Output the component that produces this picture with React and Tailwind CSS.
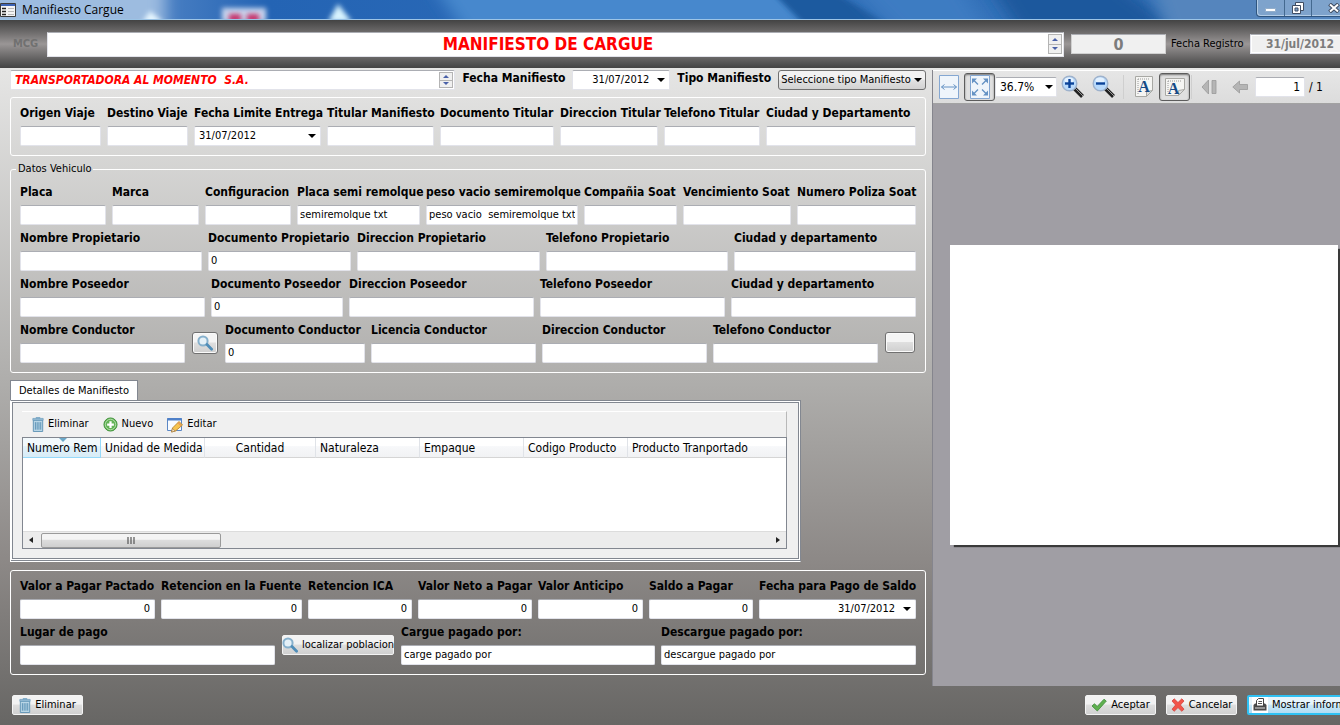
import React, { useId } from "react";

const FIELD_BOX =
  "h-5 w-full min-w-0 rounded-[2px] border border-[#e2e3ea] border-t-[#abadb3] bg-white";
const BUTTON =
  "flex items-center justify-center rounded-[3px] border border-[#707070] bg-linear-to-b from-[#f4f4f4] from-45% via-[#dfdfdf] via-50% to-[#cfcfcf] shadow-[inset_0_0_0_1px_#fafafa]";
const LIGHT_BUTTON =
  "flex h-5 items-center gap-1 whitespace-nowrap rounded-[2px] border border-[#f4f4f4] bg-linear-to-b from-[#f2f2f2] from-45% via-[#dedede] via-50% to-[#d0d0d0] text-[11px]";

function Caret({ className = "" }) {
  return (
    <svg viewBox="0 0 8 4" className={"h-1 w-2 shrink-0 " + className} aria-hidden="true">
      <path d="M0 0h8L4 4z" fill="#000" />
    </svg>
  );
}

function Label({ id, children }) {
  return (
    <label htmlFor={id} className="block h-4 text-[12px] leading-4 font-bold whitespace-nowrap text-black">
      {children}
    </label>
  );
}

function DateBox({ id, value, right }) {
  return (
    <div className={"flex items-center pr-1 " + FIELD_BOX}>
      <input
        id={id}
        type="text"
        defaultValue={value}
        className={"h-4 w-full min-w-0 bg-transparent px-1 text-[11px] leading-4 outline-none " + (right ? "pr-2 text-right" : "")}
      />
      <button type="button" aria-label="Abrir calendario" className="flex h-4 shrink-0 items-center">
        <Caret />
      </button>
    </div>
  );
}

function Field({ label, value = "", date, right }) {
  const id = useId();
  return (
    <div className="flex min-w-0 flex-col gap-[5px]">
      <Label id={id}>{label}</Label>
      {date ? (
        <DateBox id={id} value={value} right={right} />
      ) : (
        <input
          id={id}
          type="text"
          defaultValue={value}
          className={"pb-0.5 text-[11px] leading-4 outline-none " + FIELD_BOX + (right ? " px-1 text-right" : " px-0.5")}
        />
      )}
    </div>
  );
}

function Spinner({ tall }) {
  const half = "flex flex-1 items-center justify-center border border-[#b4b4b4] bg-[#f0f0f0]";
  return (
    <div className={"flex w-[14px] shrink-0 flex-col " + (tall ? "h-5" : "h-4")}>
      <button type="button" aria-label="Subir" className={half}>
        <svg viewBox="0 0 6 3" className="h-[3px] w-1.5"><path d="M3 0l3 3H0z" fill="#4a61a8" /></svg>
      </button>
      <button type="button" aria-label="Bajar" className={half + " border-t-0"}>
        <svg viewBox="0 0 6 3" className="h-[3px] w-1.5"><path d="M0 0h6L3 3z" fill="#4a61a8" /></svg>
      </button>
    </div>
  );
}

function SearchIcon() {
  return (
    <svg viewBox="0 0 16 16" className="size-4 shrink-0" aria-hidden="true">
      <circle cx="6" cy="6" r="4.6" fill="#e4f0f7" stroke="#86b0cc" strokeWidth="2" />
      <path d="M10 9.6l4.6 4.6" stroke="#4f8db8" strokeWidth="2.8" strokeLinecap="round" />
    </svg>
  );
}

function TrashIcon() {
  return (
    <svg viewBox="0 0 12 16" className="h-[15px] w-3 shrink-0" aria-hidden="true">
      <path d="M4 1.5V.5h4v1M.5 1.5h11v2H.5z" fill="#a5c8dd" stroke="#6d9dbd" strokeWidth=".8" />
      <path d="M1 3.5h10V15.5H1z" fill="#b9d6e6" stroke="#5f93b5" />
      <path d="M3.2 5.5v8M5.1 5.5v8M7 5.5v8M8.9 5.5v8" stroke="#4d87ad" strokeWidth=".9" />
    </svg>
  );
}

function AddIcon() {
  return (
    <svg viewBox="0 0 16 16" className="size-[15px] shrink-0" aria-hidden="true">
      <circle cx="8" cy="8" r="7" fill="#63b357" stroke="#3f9139" />
      <circle cx="8" cy="8" r="5.6" fill="none" stroke="#b7e0ae" />
      <path d="M8 4.4v7.2M4.4 8h7.2" stroke="#fff" strokeWidth="2.4" />
    </svg>
  );
}

function EditIcon() {
  return (
    <svg viewBox="0 0 16 16" className="size-4 shrink-0" aria-hidden="true">
      <path d="M.5 1.5h14v12H.5z" fill="#f8fbff" stroke="#5b87c5" />
      <path d="M.5 1h14v2.5H.5z" fill="#4f80c8" />
      <path d="M4.5 15l1-4 6.5-6.5 3.500 3.500L8.500 14z" fill="#f6c44f" stroke="#b9832a" strokeWidth=".9" />
      <path d="M4.500 15l1-3.600 2.600 2.600z" fill="#f8e3c2" stroke="#9a7440" strokeWidth=".6" />
      <path d="M11 5.600l3 3" stroke="#e8935a" strokeWidth="1.200" />
    </svg>
  );
}

function CheckIcon() {
  return (
    <svg viewBox="0 0 16 14" className="h-[14px] w-4 shrink-0" aria-hidden="true">
      <path d="M1 8l2.500-2.300 2.700 2.800L13 1.200l2.300 1.900L6.300 13z" fill="#5fb04f" stroke="#3d8a3a" strokeWidth=".8" />
    </svg>
  );
}

function CrossIcon() {
  return (
    <svg viewBox="0 0 14 14" className="size-[14px] shrink-0" aria-hidden="true">
      <path d="M1 3l2.200-2.200L7 4.500 10.800.8 13 3 9.400 7 13 11.200 10.800 13.300 7 9.600 3.200 13.300 1 11.200 4.600 7z" fill="#f25449" stroke="#cf3a35" strokeWidth=".7" />
    </svg>
  );
}

function PrinterIcon() {
  return (
    <svg viewBox="0 0 16 16" className="size-4 shrink-0" aria-hidden="true">
      <path d="M0 0h16v16H0z" fill="#fff" />
      <path d="M1.500 8L3 6.500h10L14.500 8v5.500h-13z" fill="#4a4a4a" />
      <path d="M4.500 9V3.500l2-2h5V9z" fill="#fff" stroke="#444" />
      <path d="M6.500 4.500h3.500M6 6.500h4" stroke="#555" />
      <path d="M3 11h10" stroke="#ddd" />
    </svg>
  );
}

function FitWidthIcon() {
  return (
    <svg viewBox="0 0 20 24" className="h-6 w-5" aria-hidden="true">
      <path d="M.5.5h19v23H.5z" fill="#eff5fb" stroke="#84a7d2" />
      <path d="M2.500 12h15M5.500 9.500L2.500 12l3 2.500M14.500 9.500l3 2.500-3 2.500" fill="none" stroke="#6492c4" />
    </svg>
  );
}

function FitPageIcon() {
  return (
    <svg viewBox="0 0 20 24" className="h-6 w-5" aria-hidden="true">
      <path d="M.5.5h19v23H.5z" fill="#eff5fb" stroke="#84a7d2" />
      <path d="M8 9.500L3 4.500M12 9.500l5-5M8 14.500l-5 5M12 14.500l5 5" stroke="#6492c4" strokeWidth="1.300" />
      <path d="M2 3.500h5l-5 5zM18 3.500v5l-5-5zM2 20.500v-5l5 5zM18 20.500h-5l5-5z" fill="#6492c4" />
    </svg>
  );
}

function ZoomIcon({ plus }) {
  return (
    <svg viewBox="0 0 24 24" className="size-6" aria-hidden="true">
      <path d="M13 13l8.500 8.500" stroke="#222" strokeWidth="4" />
      <path d="M13.500 12.500l8.500 8.500" stroke="#999" strokeWidth="1" />
      <circle cx="8.500" cy="8.500" r="7.300" fill="#b9dafb" stroke="#9eb2cc" strokeWidth="1.400" />
      <ellipse cx="8" cy="5.500" rx="4.500" ry="3" fill="#e3f1ff" />
      <path d="M4 8.500h9" stroke="#0a4299" strokeWidth="2.400" />
      {plus && <path d="M8.500 4v9" stroke="#0a4299" strokeWidth="2.400" />}
    </svg>
  );
}

function PageIcon({ landscape }) {
  return (
    <svg viewBox="0 0 22 22" className="size-[22px]" aria-hidden="true">
      {landscape ? (
        <path d="M1.500 2.500h19v11l-6 6h-13z" fill="#f5f5f3" stroke="#a8a8a4" />
      ) : (
        <path d="M2.500.5h17v14l-6 6h-11z" fill="#f5f5f3" stroke="#a8a8a4" />
      )}
      <path d={landscape ? "M4 5h14" : "M5 3h12"} stroke="#999" strokeDasharray="1 1" />
      <path d={landscape ? "M4 5v12" : "M5 3v15"} stroke="#999" strokeDasharray="1 1" />
      <path d={landscape ? "M14.500 19.500v-5l6-1z" : "M13.500 20.500v-5l6-1z"} fill="#ddd" stroke="#a8a8a4" />
      <text x={landscape ? "9.500" : "11"} y={landscape ? "18" : "16"} textAnchor="middle" fontFamily="Liberation Serif, serif" fontWeight="bold" fontSize="16" fill="#164a86">
        A
      </text>
    </svg>
  );
}

function FirstIcon() {
  return (
    <svg viewBox="0 0 16 16" className="size-4" aria-hidden="true">
      <path d="M7.500 1v14L1 8z" fill="#b5b5b5" stroke="#999" strokeWidth=".8" />
      <path d="M11 1.500h4v13h-4z" fill="#b5b5b5" stroke="#999" strokeWidth=".8" />
    </svg>
  );
}

function PrevIcon() {
  return (
    <svg viewBox="0 0 16 14" className="h-[14px] w-4" aria-hidden="true">
      <path d="M.8 7L7.500 1v3.500h8v5h-8V13z" fill="#b5b5b5" stroke="#999" strokeWidth=".8" />
    </svg>
  );
}

function ToolButton({ label, pressed, children }) {
  return (
    <button
      type="button"
      aria-label={label}
      className={
        "flex h-7 w-[31px] shrink-0 items-center justify-center " +
        (pressed ? "rounded-[3px] border border-[#5c5c5c] bg-[#e0e0e0] shadow-[inset_0_1px_2px_#777]" : "")
      }
    >
      {children}
    </button>
  );
}

function TitleBar() {
  return (
    <div className="relative flex h-5 shrink-0 items-center justify-between overflow-hidden border-b border-[#9cc4e6] bg-linear-to-r from-[#7fa9d8] via-[#2464b4] via-20% to-[#3a77bb]">
      <svg viewBox="0 0 1340 19" preserveAspectRatio="none" className="absolute inset-0 h-full w-full" aria-hidden="true">
        <defs>
          <filter id="soft" x="-50%" y="-100%" width="200%" height="300%"><feGaussianBlur stdDeviation="8" /></filter>
          <filter id="mid" x="-50%" y="-50%" width="200%" height="200%"><feGaussianBlur stdDeviation="2.5" /></filter>
        </defs>
        <path d="M-20-20h185v60H-20z" fill="#9dbce0" filter="url(#soft)" />
        <path d="M430-20h350l40 60H470z" fill="#4788cd" filter="url(#soft)" />
        <path d="M770-10h60l70 40h-90z" fill="#1c5a9f" filter="url(#mid)" />
        <path d="M845-20h110l40 60h-90z" fill="#3c7cc2" filter="url(#soft)" />
        <path d="M985-20h130l80 60h-170z" fill="#1b589d" filter="url(#soft)" />
        <path d="M1150-20h210v60h-190z" fill="#5485bd" filter="url(#soft)" />
        <path d="M222 8h44v14h-44z" fill="#c9d6ee" filter="url(#mid)" />
        <path d="M229 14h12v8h-12zM247 14h12v8h-12z" fill="#c62f68" filter="url(#mid)" />
        <path d="M338 4l14 18h-24z" fill="#d8f4ff" filter="url(#mid)" />
        <path d="M150 11l14 12h-22z" fill="#e6f6ff" filter="url(#mid)" />
      </svg>
      <div className="relative flex items-center gap-1.5">
        <svg viewBox="0 0 16 14" className="h-[14px] w-4" aria-hidden="true">
          <path d="M.5.5h15v13H.5z" fill="#f4f4f4" stroke="#3c3c3c" />
          <path d="M1 1h14v2H1z" fill="#3c63b5" />
          <path d="M2 5.500h4M2 8.500h4M2 11.500h4" stroke="#222" strokeWidth="1.400" />
          <path d="M8 5.500h6M8 8.500h6M8 11.500h6" stroke="#b9b9b9" />
        </svg>
        <h1 className="font-['Open_Sans','Noto_Sans',sans-serif] text-[12px] leading-4 text-black">Manifiesto Cargue</h1>
      </div>
      <div className="relative -mr-[17px] flex h-[17px] shrink-0 self-start overflow-hidden rounded-bl-[4px] border border-t-0 border-[#2f557f] bg-[#7ea3cc] shadow-[inset_1px_-1px_0_#b4cde6]">
        <button type="button" aria-label="Minimizar" className="flex w-7 items-end justify-center border-r border-[#44698f] pb-1">
          <svg viewBox="0 0 11 4" className="h-1 w-[11px]"><path d="M.5.5h10v3H.5z" fill="#fff" stroke="#93aecb" /></svg>
        </button>
        <button type="button" aria-label="Restaurar" className="flex w-[27px] items-center justify-center border-r border-[#44698f]">
          <svg viewBox="0 0 12 12" className="size-3">
            <path d="M3.500.5h8v8h-8z" fill="#fff" stroke="#3f4d63" />
            <path d="M.5 3.500h8v8h-8z" fill="#fff" stroke="#3f4d63" />
            <path d="M3 6h3v3H3z" fill="#7ea3cc" stroke="#3f4d63" />
          </svg>
        </button>
        <button type="button" aria-label="Cerrar" className="flex w-11 items-center justify-center">
          <svg viewBox="0 0 12 10" className="h-2.5 w-3">
            <path d="M1.500 1l9 8M10.500 1l-9 8" stroke="#3f4d63" strokeWidth="4" />
            <path d="M2 1.500l8 7M10 1.500l-8 7" stroke="#fff" strokeWidth="2" />
          </svg>
        </button>
      </div>
    </div>
  );
}

function HeaderBar() {
  return (
    <header className="flex h-12 shrink-0 items-center bg-linear-to-b from-[#434343] via-[#9a9696] via-50% to-[#434343]">
      <span className="w-[47px] shrink-0 pl-[13px] text-[11px] font-bold text-[#707070]">MCG</span>
      <div className="flex h-[25px] min-w-0 flex-1 items-center border border-[#e2e3ea] border-t-[#abadb3] bg-white pr-px">
        <input
          type="text"
          aria-label="Titulo"
          defaultValue="MANIFIESTO DE CARGUE"
          className="w-full min-w-0 bg-transparent text-center text-[17px] leading-5 font-bold text-[#ff0000] outline-none"
        />
        <Spinner tall />
      </div>
      <input
        type="text"
        aria-label="Numero"
        defaultValue="0"
        className="ml-[7px] h-5 w-[95px] shrink-0 border border-[#d0d0d0] border-t-[#abadb3] bg-[#f0f0f0] text-center text-[16px] leading-4 font-bold text-[#7c7c7c] outline-none"
      />
      <label htmlFor="registro" className="w-[84px] shrink-0 pl-[5px] text-[11px] whitespace-nowrap">Fecha Registro</label>
      <div className="-mr-1 flex h-5 w-[94px] shrink-0 items-center border border-[#e2e3ea] border-t-[#abadb3] bg-white px-px">
        <input id="registro" type="text" defaultValue="31/jul/2012" className="h-4 w-full bg-[#f0f0f0] pr-2 text-right text-[12px] leading-4 font-bold text-[#7c7c7c] outline-none" />
      </div>
    </header>
  );
}

function TopRow() {
  return (
    <div className="grid h-5 grid-cols-[446fr_102fr_98fr_94fr_148fr] gap-x-[7px]">
      <div className={"flex items-center pr-px " + FIELD_BOX}>
        <input
          type="text"
          aria-label="Empresa"
          defaultValue="TRANSPORTADORA AL MOMENTO  S.A."
          className="w-full min-w-0 bg-transparent px-1 text-[12px] leading-4 font-bold text-[#ff0000] italic outline-none"
        />
        <Spinner />
      </div>
      <Label id="fecha-manifiesto">Fecha Manifiesto</Label>
      <DateBox id="fecha-manifiesto" value="31/07/2012" right />
      <Label id="tipo-manifiesto">Tipo Manifiesto</Label>
      <div className="relative flex h-5 min-w-0">
        <select
          id="tipo-manifiesto"
          className="h-5 w-full min-w-0 appearance-none rounded-[3px] border border-[#707070] bg-linear-to-b from-[#f2f2f2] from-45% via-[#e2e2e2] via-50% to-[#d2d2d2] pl-0.5 text-[11px] leading-4"
        >
          <option>Seleccione tipo Manifiesto</option>
        </select>
        <Caret className="pointer-events-none absolute top-2 right-1" />
      </div>
    </div>
  );
}

const GROUP = "flex min-w-0 flex-col gap-[5px] rounded-[3px] border border-white px-[9px] pb-[9px]";

function TripGroup() {
  return (
    <section className={"mt-[7px] pt-[7px] " + GROUP}>
      <div className="grid grid-cols-[81fr_81fr_127fr_107fr_114fr_98fr_96fr_150fr] gap-x-[6px]">
        <Field label="Origen Viaje" />
        <Field label="Destino Viaje" />
        <Field label="Fecha Limite Entrega" value="31/07/2012" date />
        <Field label="Titular Manifiesto" />
        <Field label="Documento Titular" />
        <Field label="Direccion Titular" />
        <Field label="Telefono Titular" />
        <Field label="Ciudad y Departamento" />
      </div>
    </section>
  );
}

function VehicleGroup() {
  return (
    <fieldset className={"mt-[6px] pt-2 " + GROUP}>
      <legend className="-ml-1 h-[14px] px-0.5 text-[11px] leading-[14px]">Datos Vehiculo</legend>
      <div className="grid grid-cols-[86fr_87fr_86fr_123fr_152fr_93fr_108fr_119fr] gap-x-[6px]">
        <Field label="Placa" />
        <Field label="Marca" />
        <Field label="Configuracion" />
        <Field label="Placa semi remolque" value="semiremolque txt" />
        <Field label="peso vacio semiremolque" value="peso vacio  semiremolque txt" />
        <Field label="Compañia Soat" />
        <Field label="Vencimiento Soat" />
        <Field label="Numero Poliza Soat" />
      </div>
      <div className="grid grid-cols-[182fr_143fr_183fr_182fr_182fr] gap-x-[6px]">
        <Field label="Nombre Propietario" />
        <Field label="Documento Propietario" value="0" />
        <Field label="Direccion Propietario" />
        <Field label="Telefono Propietario" />
        <Field label="Ciudad y departamento" />
      </div>
      <div className="grid grid-cols-[185fr_132fr_185fr_185fr_185fr] gap-x-[6px]">
        <Field label="Nombre Poseedor" />
        <Field label="Documento Poseedor" value="0" />
        <Field label="Direccion Poseedor" />
        <Field label="Telefono Poseedor" />
        <Field label="Ciudad y departamento" />
      </div>
      <div className="grid grid-cols-[165fr_28px_140fr_165fr_165fr_165fr_32px] gap-x-[6px]">
        <Field label="Nombre Conductor" />
        <div className="px-px pt-[10px]">
          <button type="button" aria-label="Buscar conductor" className={"h-[22px] w-full " + BUTTON}><SearchIcon /></button>
        </div>
        <Field label="Documento Conductor" value="0" />
        <Field label="Licencia Conductor" />
        <Field label="Direccion Conductor" />
        <Field label="Telefono Conductor" />
        <div className="px-px pt-[10px]">
          <button type="button" aria-label="Abrir conductor" className={"h-[21px] w-full " + BUTTON} />
        </div>
      </div>
    </fieldset>
  );
}

const TH =
  "h-5 border-r border-b border-[#e0e3e8] border-b-[#d5d5d5] bg-linear-to-b from-white from-40% via-[#f7f8fa] via-45% to-[#f1f2f4] px-1 text-left whitespace-nowrap font-normal";

function DetailsTabs() {
  return (
    <section className="mt-[7px] w-[791px] max-w-full">
      <div role="tablist" className="flex">
        <button type="button" role="tab" aria-selected="true" className="h-5 w-32 border border-b-0 border-[#828790] bg-white text-[11px] leading-4 whitespace-nowrap">
          Detalles de Manifiesto
        </button>
      </div>
      <div className="border border-[#828790] border-l-white border-b-white bg-white p-px shadow-[inset_0_-1px_0_#828790]">
        <div className="border border-[#828790] bg-[#f0f0f0] pt-2 pr-[11px] pb-[9px] pl-[9px]">
          <div className="flex h-[26px] items-center gap-[14px] border-t border-r border-white border-r-[#b8b8b8] px-[10px] text-[11px]">
            <button type="button" className="flex items-center gap-1"><TrashIcon />Eliminar</button>
            <button type="button" className="flex items-center gap-1"><AddIcon />Nuevo</button>
            <button type="button" className="flex items-center gap-1"><EditIcon />Editar</button>
          </div>
          <div className="h-28 border border-[#828790] bg-white">
            <table className="w-full table-fixed border-separate border-spacing-0 text-[12px] leading-4">
              <colgroup>
                <col className="w-[78px]" />
                <col className="w-[104px]" />
                <col className="w-[111px]" />
                <col className="w-[104px]" />
                <col className="w-[104px]" />
                <col className="w-[104px]" />
                <col />
              </colgroup>
              <thead>
                <tr>
                  <th className="relative h-5 border-r border-b border-[#96d9f9] bg-linear-to-b from-[#f2f9fc] from-40% via-[#e2f2fb] via-45% to-[#d8ecf6] pl-1 text-left font-normal whitespace-nowrap">
                    Numero Rem
                    <svg viewBox="0 0 8 4" className="absolute top-0 left-9 h-1 w-2"><path d="M0 0h8L4 4z" fill="#6ba8c8" /></svg>
                  </th>
                  <th className={TH}>Unidad de Medida</th>
                  <th className={TH}><span className="block text-center">Cantidad</span></th>
                  <th className={TH}>Naturaleza</th>
                  <th className={TH}>Empaque</th>
                  <th className={TH}>Codigo Producto</th>
                  <th className={TH + " border-r-0"}>Producto Tranportado</th>
                </tr>
              </thead>
              <tbody>
                <tr><td colSpan={7} className="h-[73px]" /></tr>
              </tbody>
            </table>
            <div className="flex h-[17px] items-center justify-between border-t border-[#dcdcdc] bg-[#ececec] px-[6px]">
              <div className="flex items-center gap-2">
                <svg viewBox="0 0 4 6" className="h-1.5 w-1"><path d="M4 0v6L0 3z" fill="#222" /></svg>
                <div className="flex h-[15px] w-[180px] items-center justify-center rounded-[2px] border border-[#9a9a9a] bg-linear-to-b from-[#f4f4f4] from-40% via-[#dcdcdc] via-50% to-[#cfcfcf]">
                  <svg viewBox="0 0 8 7" className="h-[7px] w-2"><path d="M1 0v7M4 0v7M7 0v7" stroke="#555" strokeWidth="1.200" /></svg>
                </div>
              </div>
              <svg viewBox="0 0 4 6" className="h-1.5 w-1"><path d="M0 0v6l4-3z" fill="#222" /></svg>
            </div>
          </div>
        </div>
        <div className="h-px" />
      </div>
    </section>
  );
}

function PaymentGroup() {
  return (
    <section className={"mt-2 pt-[7px] " + GROUP}>
      <div className="grid grid-cols-[135fr_141fr_104fr_114fr_105fr_104fr_157fr] gap-x-[6px]">
        <Field label="Valor a Pagar Pactado" value="0" right />
        <Field label="Retencion en la Fuente" value="0" right />
        <Field label="Retencion ICA" value="0" right />
        <Field label="Valor Neto a Pagar" value="0" right />
        <Field label="Valor Anticipo" value="0" right />
        <Field label="Saldo a Pagar" value="0" right />
        <Field label="Fecha para Pago de Saldo" value="31/07/2012" date right />
      </div>
      <div className="grid grid-cols-[255fr_114px_254fr_255fr] gap-x-[6px]">
        <Field label="Lugar de pago" />
        <div className="px-px pt-[11px]">
          <button type="button" className={"w-full justify-center " + LIGHT_BUTTON}><SearchIcon />localizar poblacion</button>
        </div>
        <Field label="Cargue pagado por:" value="carge pagado por" />
        <Field label="Descargue pagado por:" value="descargue pagado por" />
      </div>
    </section>
  );
}

function ReportViewer() {
  return (
    <section className="flex min-w-0 flex-col overflow-hidden border-l border-[#85858d] bg-[#a09ea4]">
      <div className="flex h-[34px] shrink-0 items-center border-t border-b border-white border-b-[#a2a2a2] bg-linear-to-b from-[#e6e6e6] to-[#dcdcdc]">
        <ToolButton label="Ajustar al ancho"><FitWidthIcon /></ToolButton>
        <ToolButton label="Ajustar a la pagina" pressed><FitPageIcon /></ToolButton>
        <div className="relative flex w-[62px] shrink-0">
          <select aria-label="Zoom" className={"appearance-none pl-1 text-[12px] leading-4 " + FIELD_BOX}>
            <option>36.7%</option>
          </select>
          <Caret className="pointer-events-none absolute top-2 right-1" />
        </div>
        <ToolButton label="Acercar"><ZoomIcon plus /></ToolButton>
        <ToolButton label="Alejar"><ZoomIcon /></ToolButton>
        <div className="mx-1 h-6 w-px shrink-0 bg-[#cfcfcf]" />
        <ToolButton label="Vertical"><PageIcon /></ToolButton>
        <ToolButton label="Horizontal" pressed><PageIcon landscape /></ToolButton>
        <div className="mx-px h-6 w-px shrink-0 bg-[#cfcfcf]" />
        <ToolButton label="Primera pagina"><FirstIcon /></ToolButton>
        <ToolButton label="Pagina anterior"><PrevIcon /></ToolButton>
        <div className="w-[50px] shrink-0">
          <input type="text" aria-label="Pagina" defaultValue="1" className={"block px-1 text-right text-[12px] leading-4 outline-none " + FIELD_BOX} />
        </div>
        <span className="pl-1 text-[12px] whitespace-nowrap">/ 1</span>
      </div>
      <div className="flex flex-1 items-center pr-0.5 pl-[17px]">
        <div className="aspect-[388/300] w-full bg-white shadow-[3px_3px_1px_-1px_#3a3a3a]" />
      </div>
    </section>
  );
}

export default function App() {
  return (
    <div className="min-h-screen overflow-x-hidden bg-[linear-gradient(to_bottom,#e6e6e5_9%,#aeadab_53%,#8d8987_77%,#676664_100%)] font-['DejaVu_Sans_Condensed','Noto_Sans',sans-serif] text-black">
      <div className="flex min-h-screen flex-col">
        <TitleBar />
        <HeaderBar />
        <main className="grid flex-1 grid-cols-[932fr_408fr] pt-0.5">
          <div className="min-w-0 pr-[6px] pb-[11px] pl-[10px]">
            <TopRow />
            <TripGroup />
            <VehicleGroup />
            <DetailsTabs />
            <PaymentGroup />
          </div>
          <ReportViewer />
        </main>
        <footer className="flex shrink-0 items-center justify-between overflow-hidden pt-[9px] pb-[10px] pl-3">
          <button type="button" className={"w-[71px] justify-center " + LIGHT_BUTTON}><TrashIcon />Eliminar</button>
          <div className="-mr-5 flex gap-[10px]">
            <button type="button" className={"w-[71px] justify-center " + LIGHT_BUTTON}><CheckIcon />Aceptar</button>
            <button type="button" className={"w-[71px] justify-center " + LIGHT_BUTTON}><CrossIcon />Cancelar</button>
            <button type="button" className="flex h-5 w-[113px] items-center gap-1 rounded-[2px] border-2 border-[#2fc1f3] bg-linear-to-b from-[#e8f5fc] from-45% via-[#c9e8f8] via-50% to-[#b2dcf3] pl-[3px] text-[11px] whitespace-nowrap">
              <PrinterIcon />Mostrar informe
            </button>
          </div>
        </footer>
      </div>
    </div>
  );
}
